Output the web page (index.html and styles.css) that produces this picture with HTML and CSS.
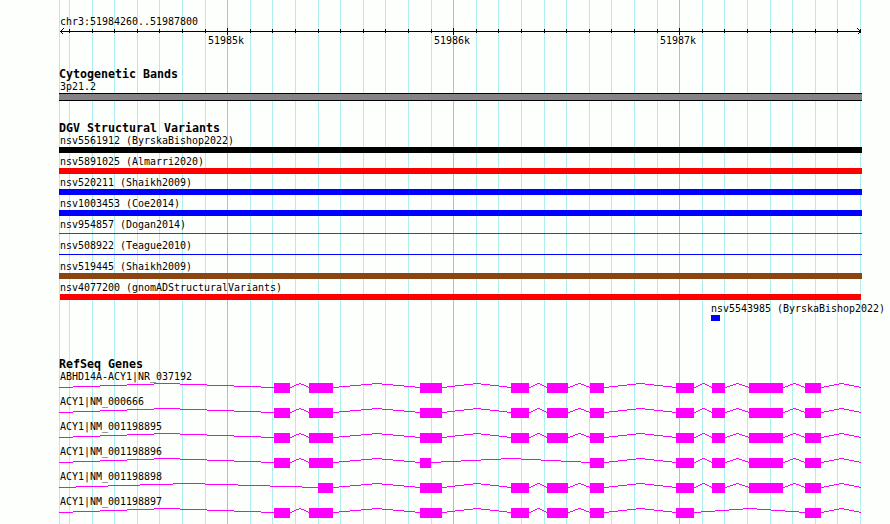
FILE: index.html
```html
<!DOCTYPE html>
<html lang="en">
<head>
  <meta charset="UTF-8" />
  <title>chr3:51984260..51987800</title>
  <link rel="stylesheet" href="styles.css">
</head>
<body>
  <svg id="grid" class="grid" width="890" height="524"></svg>

  <div class="panel">
    <div class="ruler">
      <div class="label"><span>chr3:51984260..51987800</span></div>
      <svg id="axis" class="axis" width="890" height="7"></svg>
      <div class="ticks">
        <div class="label"><span>51985k</span></div>
        <div class="label"><span>51986k</span></div>
        <div class="label"><span>51987k</span></div>
      </div>
    </div>

    <div class="track cyto">
      <h2><span>Cytogenetic Bands</span></h2>
      <div class="label"><span>3p21.2</span></div>
      <div class="band"></div>
    </div>

    <div class="track variants">
      <h2><span>DGV Structural Variants</span></h2>
      <div class="row"><div class="label"><span>nsv5561912 (ByrskaBishop2022)</span></div><div class="bar black"></div></div>
      <div class="row"><div class="label"><span>nsv5891025 (Almarri2020)</span></div><div class="bar red"></div></div>
      <div class="row"><div class="label"><span>nsv520211 (Shaikh2009)</span></div><div class="bar blue"></div></div>
      <div class="row"><div class="label"><span>nsv1003453 (Coe2014)</span></div><div class="bar blue"></div></div>
      <div class="row"><div class="label"><span>nsv954857 (Dogan2014)</span></div><div class="bar thin red"></div></div>
      <div class="row"><div class="label"><span>nsv508922 (Teague2010)</span></div><div class="bar thin blue"></div></div>
      <div class="row"><div class="label"><span>nsv519445 (Shaikh2009)</span></div><div class="bar brown"></div></div>
      <div class="row"><div class="label"><span>nsv4077200 (gnomADStructuralVariants)</span></div><div class="bar red inner"></div></div>
      <div class="row right"><div class="label"><span>nsv5543985 (ByrskaBishop2022)</span></div><div class="bar blue small"></div></div>
    </div>

    <div class="track genes">
      <h2><span>RefSeq Genes</span></h2>
      <div id="genes"></div>
    </div>
  </div>

  <script>
    const LEFT = 59;
    const RIGHT = 861;

    // grid lines every 100 bp, darker ones every 1000 bp
    let grid = '<rect class="minor" x="59" y="0" width="1" height="524"/>';
    let axis = '<path d="M60 3.5H861M63.5 0.5L60.5 3.5L63.5 6.5M857.5 0.5L860.5 3.5L857.5 6.5"/>';
    for (let i = 0; i <= 35; i++) {
      const x = Math.floor(69.5 + i * 22.6);
      const major = i % 10 === 7;
      grid += `<rect class="${major ? 'major' : 'minor'}" x="${x}" y="0" width="1" height="524"/>`;
      axis += major
        ? `<rect x="${x}" y="0" width="1" height="7"/>`
        : `<rect x="${x}" y="1" width="1" height="4"/>`;
    }
    document.getElementById("grid").innerHTML = grid;
    document.getElementById("axis").innerHTML = axis;

    // exons as [start, end]
    const full = [[274, 290], [309, 333], [420, 442], [511, 529], [547, 568],
      [590, 604], [676, 694], [712, 725], [749, 783], [805, 821]];
    const genes = [
      { name: "ABHD14A-ACY1|NR_037192", exons: full },
      { name: "ACY1|NM_000666", exons: full },
      { name: "ACY1|NM_001198895", exons: full },
      { name: "ACY1|NM_001198896", exons: [full[0], full[1], [420, 431], ...full.slice(5)] },
      { name: "ACY1|NM_001198898", exons: [[318, 333], ...full.slice(2)] },
      { name: "ACY1|NM_001198897", exons: [...full.slice(0, 7), full[9]] }
    ];

    // intron: one pixel line that climbs 4px to the middle and back
    function intron(from, to) {
      let s = "";
      const w = to - from;
      const edges = [0, 1, 3, 5, 7, 9, 11, 13, 15, 16].map(n => from + Math.ceil(w * n / 16));
      const ys = [4, 3, 2, 1, 0, 1, 2, 3, 4];
      for (let i = 0; i < 9; i++) {
        s += `<rect x="${edges[i]}" y="${ys[i]}" width="${edges[i + 1] - edges[i]}" height="1"/>`;
      }
      return s;
    }

    document.getElementById("genes").innerHTML = genes.map(g => {
      let shapes = "";
      let x = LEFT;
      g.exons.forEach(([a, b]) => {
        shapes += intron(x, a) + `<rect x="${a}" y="0" width="${b - a}" height="10"/>`;
        x = b;
      });
      shapes += intron(x, RIGHT);
      return `<div class="gene"><div class="label"><span>${g.name}</span></div>` +
        `<svg width="890" height="10">${shapes}</svg></div>`;
    }).join("");
  </script>
</body>
</html>
```
FILE: styles.css
```css
body {
  margin: 0;
  width: 890px;
  height: 524px;
  overflow: hidden;
  background: #fdfffc;
  color: #000;
  font-family: "DejaVu Sans Mono", monospace;
}
svg {
  display: block;
  shape-rendering: crispEdges;
}
.grid {
  position: absolute;
  top: 0;
  left: 0;
}
.minor {
  fill: #afeeee;
}
.major {
  fill: #87ceeb;
}
.panel {
  position: relative;
  padding-top: 15px;
}
.label {
  height: 13px;
  padding-left: 60px;
  font-size: 9.97px;
  line-height: 13px;
  white-space: pre;
}
.label span {
  display: inline-block;
  transform: scaleY(1.12);
}
h2 {
  margin: 0;
  height: 12px;
  padding-left: 59px;
  font-size: 11.63px;
  line-height: 12px;
  font-weight: bold;
  white-space: pre;
}
.axis path {
  fill: none;
  stroke: #000;
}
.ticks {
  display: flex;
  gap: 190px;
  padding-left: 208px;
  margin-top: -1px;
}
.ticks .label {
  width: 36px;
  padding-left: 0;
}
.cyto {
  margin-top: 21px;
}
.band {
  width: 803px;
  height: 8px;
  box-sizing: border-box;
  margin-left: 59px;
  background: #868286;
  border-top: 1px solid #000;
  border-bottom: 1px solid #000;
}
.variants {
  margin-top: 21px;
}
.row {
  height: 21px;
}
.bar {
  width: 803px;
  height: 6px;
  margin-left: 59px;
}
.black {
  background: #000;
}
.red {
  background: #f00;
}
.blue {
  background: #00f;
}
.brown {
  background: #8b4513;
}
.thin {
  height: 1px;
  margin-top: 2px;
}
.inner {
  width: 801px;
  margin-left: 60px;
}
.right .label {
  padding-left: 711px;
}
.small {
  width: 9px;
  margin-left: 711px;
}
.genes {
  margin-top: 35px;
}
.gene {
  height: 25px;
}
.gene svg {
  fill: #f0f;
}
```
